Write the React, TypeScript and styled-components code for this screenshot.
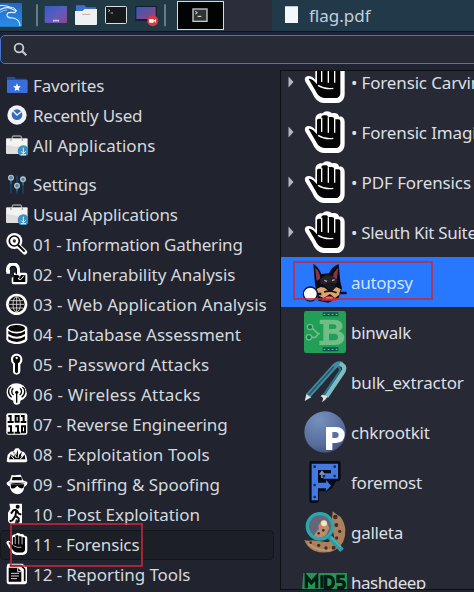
import React from 'react';
import styled, { createGlobalStyle } from 'styled-components';

const Global = createGlobalStyle`
  *, *::before, *::after { box-sizing: border-box; }
  html, body { margin: 0; padding: 0; background: #21242f; overflow: hidden; }
  body { font-family: "Noto Sans", "Open Sans", sans-serif; }
  svg { display: block; flex: none; }
`;

const Screen = styled.div`
  width: 474px;
  height: 592px;
  overflow: hidden;
  display: flex;
  flex-direction: column;
  background: #21242f;
  color: #d5d8dd;
`;

const TopBar = styled.header`
  display: flex;
  align-items: flex-start;
  height: 31px;
  background: #213845;
`;

const Launchers = styled.div`
  display: flex;
  width: 224px;
  height: 31px;
`;

const Gap = styled.div`
  width: 48px;
  height: 31px;
  background: #2b2e3a;
`;

const WindowTab = styled.div`
  flex: 1;
  height: 31px;
  display: flex;
  align-items: center;
  gap: 11px;
  padding-left: 13px;
  background: #22394a;
  color: #c2d0da;
  font-size: 17px;
  line-height: 31px;
`;

const PageIcon = styled.div`
  width: 13px;
  height: 17px;
  background: #f3f8fc;
  border-top: 1px solid #b9c7d2;
  margin-top: -2px;
`;

const SearchWrap = styled.div`
  height: 35px;
  flex: none;
  padding-top: 3px;
  border-top: 1px solid #0c1622;
  background: #1b2438;
`;

const SearchBox = styled.div`
  height: 29px;
  width: 480px;
  display: flex;
  align-items: center;
  padding-left: 12px;
  border: 1px solid #4775cc;
  border-radius: 5px;
  background: #282a35;
`;

const Body = styled.main`
  flex: 1;
  display: flex;
  min-height: 0;
`;

const Sidebar = styled.nav`
  width: 280px;
  padding-top: 5px;
  overflow: hidden;
`;

const Category = styled.div<{ $gapBefore?: boolean; $active?: boolean }>`
  width: 274px;
  height: 30px;
  margin-top: ${p => (p.$gapBefore ? 9 : 0)}px;
  padding: 0 0 2px 6px;
  display: flex;
  align-items: center;
  gap: 5px;
  border-radius: 5px;
  background: ${p => (p.$active ? '#1c1f25' : 'transparent')};
  box-shadow: ${p => (p.$active ? 'inset 0 0 0 1px #14161c' : 'none')};
`;

const Label = styled.span<{ $spacing?: number }>`
  font-size: 17px;
  line-height: 24px;
  padding-top: 1px;
  white-space: pre;
  letter-spacing: ${p => p.$spacing ?? 0}px;
`;

const Results = styled.section`
  flex: 1;
  min-width: 0;
  height: 520px;
  margin-top: 4px;
  overflow: hidden;
  background: #272a35;
  border: solid #0d0f15;
  border-width: 1px 0 1px 1px;
`;

const ResultList = styled.div`
  margin-top: -14px;
`;

const Result = styled.div<{ $active?: boolean }>`
  height: 50px;
  display: flex;
  align-items: center;
  background: ${p => (p.$active ? '#2777ff' : 'transparent')};
  color: ${p => (p.$active ? '#cfe2ff' : '#dcdfe3')};
`;

const ArrowCell = styled.div`
  width: 23px;
  flex: none;
  padding-left: 7px;
`;

const ResultLabel = styled(Label)`
  margin-left: 5px;
  padding-top: 2px;
`;

const Marker = styled.div<{ $x: number; $y: number; $w: number; $h: number }>`
  position: absolute;
  left: ${p => p.$x}px;
  top: ${p => p.$y}px;
  width: ${p => p.$w}px;
  height: ${p => p.$h}px;
  border: 2px solid rgba(200, 40, 62, 0.78);
`;

const Kali = () => (
  <svg width="36" height="31" viewBox="0 0 108 93">
    <defs>
      <linearGradient id="kali" x1="0" y1="0" x2="0" y2="1">
        <stop offset="0" stopColor="#2367c4" />
        <stop offset="1" stopColor="#288de9" />
      </linearGradient>
    </defs>
    <path d="M0 9H62Q66 9 66 13V76Q66 80 62 80H0Z" fill="url(#kali)" />
    <g fill="none" stroke="#dff3ff" strokeWidth="3.5" strokeLinecap="round">
      <path d="M0 17Q18 15 31 22" />
      <path d="M0 29Q20 18 36 27L49 32 44 38Q20 34 21 46 22 54 39 54 58 57 60 76" />
      <path d="M33 22Q44 21 48 31" strokeWidth="3" />
      <path d="M0 37Q10 30 20 30" strokeWidth="2" />
    </g>
  </svg>
);

const Quick = () => (
  <svg width="188" height="31" viewBox="108 0 564 93">
    <defs>
      <linearGradient id="desk" x1="0" y1="0" x2="1" y2="1">
        <stop offset="0" stopColor="#355bc2" />
        <stop offset=".5" stopColor="#5a5dc0" />
        <stop offset="1" stopColor="#8e4690" />
      </linearGradient>
      <linearGradient id="desk2" x1="0" y1="0" x2="1" y2="1">
        <stop offset="0" stopColor="#3059bb" />
        <stop offset="1" stopColor="#9b4378" />
      </linearGradient>
    </defs>
    <path d="M111 13V79M495 13V79" stroke="#81909a" strokeWidth="4.5" />
    <rect x="134" y="18" width="67" height="51" rx="3" fill="url(#desk)" />
    <path d="M159 62h18" stroke="#d4dcff" strokeWidth="5" strokeDasharray="5 1.5" />
    <path d="M228 16h25l6 6h29v22h-60z" fill="#3b70cf" />
    <path d="M225 33h22l7-6h37v45q0 3-3 3h-60q-3 0-3-3z" fill="#eef0f3" />
    <path d="M246 43h25" stroke="#c4968b" strokeWidth="2.5" />
    <rect x="316.500" y="19.500" width="63" height="51" rx="3" fill="#17191b" stroke="#d8dfe2" strokeWidth="3" />
    <path d="M325 29l5 3-5 3M332 39h7" stroke="#cbd2d5" strokeWidth="2.500" fill="none" />
    <rect x="406" y="18" width="64" height="45" fill="#131d2e" />
    <rect x="409" y="21" width="58" height="36" fill="url(#desk2)" />
    <circle cx="458" cy="62" r="16.500" fill="#d63a45" />
    <rect x="447" y="57" width="14" height="11" rx="2" fill="#fff" />
    <path d="M461 62l7-5v11z" fill="#fff" />
    <rect x="532.500" y="10.500" width="138" height="78" fill="#020303" stroke="#d5dade" strokeWidth="3" transform="translate(0 -6) scale(1 1)" />
    <rect x="532.500" y="4.500" width="138" height="84" fill="#020303" stroke="#d5dade" strokeWidth="3" />
    <rect x="579" y="27" width="42" height="37" fill="#2e3335" stroke="#c6cbcd" strokeWidth="4" />
    <path d="M586 34l6 4-6 4M593 49h11" stroke="#f2f4f4" strokeWidth="3" fill="none" />
  </svg>
);

const Search = () => (
  <svg width="15" height="15" viewBox="0 0 45 45">
    <circle cx="18" cy="18" r="13" fill="none" stroke="#c6c9d1" strokeWidth="5.500" />
    <path d="M27 27L40 40" stroke="#c6c9d1" strokeWidth="6.500" />
  </svg>
);

const Briefcase = () => (
  <g>
    <path d="M19 15V9q0-3 4-3h19q4 0 4 3v6" fill="none" stroke="#969a9b" strokeWidth="4" />
    <rect x="0" y="13" width="65" height="47" rx="3" fill="#dedede" />
    <path d="M2 15h61v18L32 38 2 33z" fill="#f2f2f0" />
    <path d="M15 14v7M49 14v7" stroke="#a7a9a9" strokeWidth="4" />
    <circle cx="52" cy="51" r="17" fill="#3c91c0" />
    <path d="M52 41v17M45 52l7 7 7-7M44 62h16" fill="none" stroke="#e1f3fb" strokeWidth="3" />
  </g>
);

const Hand = () => (
  <>
    <path d="M5 48C0 54 3 61 8 68L25 96C33 115 43 125 60 126H96C114 126 122 114 122 98V32C122 20 113 14 106 17C102 5 91 5 84 7C76-2 61-1 56 7C44 5 34 12 34 24V56C26 46 13 41 5 48Z" fill="#fff" />
    <path d="M14 54C21 51 29 58 39 70V28Q39 23 44 23H52V18Q53 13 59 13H67Q71 13 72 18H83Q90 18 91 25H103Q109 25 109 31V98Q107 110 96 111H62C48 110 40 101 35 90Z" fill="#050505" />
    <path d="M53 20V63M73 19V65M92 24V65" stroke="#fff" strokeWidth="4" />
    <path d="M42 73Q63 86 88 82" fill="none" stroke="#fff" strokeWidth="4" />
  </>
);

const icons: Record<string, React.ReactNode> = {
  favorites: (
    <>
      <path d="M3 9h22l5 5h32v12H3z" fill="#224fa5" />
      <rect x="3" y="18" width="62" height="39" rx="3" fill="#386fdb" />
      <path d="M33 28l3.500 8 8 1-6 6 1.500 8-7-4-7 4 1.500-8-6-6 8-1z" fill="#f2f7ff" />
    </>
  ),
  recent: (
    <>
      <circle cx="33" cy="33" r="29" fill="#f2f4f5" />
      <circle cx="33" cy="32" r="16" fill="#356ac0" />
      <path d="M22 22l11 11 13-10" fill="none" stroke="#f4f4f4" strokeWidth="4" />
    </>
  ),
  applications: <Briefcase />,
  settings: (
    <>
      <path d="M15 8v54M33 8v54M51 8v54" stroke="#17436a" strokeWidth="5" />
      <path d="M15 15v17M33 38v17M51 20v17" stroke="#2878a9" strokeWidth="4" />
      <g fill="#5a7d91" stroke="#a8c3ce" strokeWidth="4">
        <circle cx="15" cy="14" r="7" /><circle cx="51" cy="19" r="7" /><circle cx="33" cy="38" r="7" />
      </g>
    </>
  ),
  info: (
    <>
      <path d="M37 39L56 57" stroke="#fff" strokeWidth="15" strokeLinecap="round" />
      <circle cx="25" cy="24" r="24" fill="#fff" />
      <circle cx="25" cy="24" r="15" fill="#fff" stroke="#060708" strokeWidth="5" />
      <path d="M36 36L56 56" stroke="#080808" strokeWidth="6" />
      <circle cx="25" cy="24" r="5" fill="#31343a" />
    </>
  ),
  vulnerability: (
    <>
      <path d="M6 27V18C6-1 36-1 36 18V34" fill="none" stroke="#fff" strokeWidth="12" />
      <path d="M1 22H12V32H1ZM24 29H58Q64 29 64 35V57Q64 64 57 64H25Q17 64 17 57V45L24 40Z" fill="#fff" />
      <path d="M12 20C13 7 30 7 31 20V34" fill="none" stroke="#080909" strokeWidth="4" />
      <path d="M22 36H36L42 42 45 36H58V57H22Z" fill="#030505" />
      <path d="M40 43L37 48l7 2 10-12" fill="none" stroke="#fff" strokeWidth="3" />
    </>
  ),
  web: (
    <>
      <circle cx="32" cy="34" r="32" fill="#fff" />
      <circle cx="32" cy="34" r="24" fill="#0c0e10" />
      <g fill="none" stroke="#e2e2e2" strokeWidth="2.5">
        <ellipse cx="32" cy="34" rx="11" ry="23" />
        <path d="M9 34h46M13 23h38M13 45h38M32 11v46" />
      </g>
    </>
  ),
  database: (
    <>
      <path d="M1 17C2-3 63-3 64 17V49C61 68 4 68 1 49Z" fill="#fff" />
      <ellipse cx="32" cy="16" rx="25" ry="10" fill="#050505" />
      <path d="M7 24Q32 39 57 24V33Q32 49 7 33ZM7 40Q32 55 57 40V49Q32 65 7 49Z" fill="#050505" />
    </>
  ),
  password: (
    <>
      <path d="M15 18C16-3 47-3 49 18 50 27 45 32 43 34V55Q42 65 32 65 21 65 21 55V34Q14 28 15 18Z" fill="#fff" />
      <path d="M21 18C22 6 42 5 43 18Q43 27 36 31V58L31 61 27 57V31Q21 27 21 18Z" fill="#050505" />
      <circle cx="32" cy="15" r="3.500" fill="#fff" />
    </>
  ),
  wireless: (
    <>
      <path d="M10 8Q30-6 53 8 66 23 61 39 55 50 43 53V57Q42 65 32 65 23 65 22 57V53Q7 49 3 36-1 18 10 8Z" fill="#fff" />
      <g fill="none" stroke="#080808" strokeWidth="4">
        <path d="M17 43C3 32 7 16 15 12M47 43C61 32 57 16 49 12M23 36C15 31 16 20 22 16M41 36C49 31 48 20 42 16M32 29V59" />
      </g>
      <circle cx="32" cy="28" r="5" fill="#080808" />
    </>
  ),
  reverse: (
    <>
      <rect x="1" y="1" width="63" height="64" rx="6" fill="#fff" />
      <g fill="none" stroke="#050505" strokeWidth="6">
        <path d="M7 9h7v17M5 27h18M29 9h9v17H29zM45 9h8v17M44 27h17M7 40h8v18M5 59h18M28 40h8v18M26 59h17M48 40h9v18H48z" />
      </g>
    </>
  ),
  exploit: (
    <>
      <path d="M2 55L5 35 14 26 22 25 29 16H38L45 25 54 27 61 38 64 54 60 58H6Z" fill="#fff" />
      <path d="M9 49L14 33 25 42 22 25 31 37 34 20 38 37 48 26 44 42 56 35 58 49Z" fill="#050505" />
      <path d="M24 48L14 37M31 45L24 30M36 45l3-18M43 48L53 37" stroke="#fff" strokeWidth="3" />
    </>
  ),
  spoof: (
    <>
      <path d="M12 22L17 6Q27 8 33 6L44 5 51 22 64 27Q65 38 55 41 53 63 34 64 14 62 11 40 0 36 2 29Z" fill="#fff" />
      <path d="M20 12H46L48 22H17ZM8 29H59Q33 37 8 29Z" fill="#080808" />
      <path d="M14 34H55L52 44Q46 49 38 43L34 38 29 43Q21 50 15 44Z" fill="#050505" />
    </>
  ),
  exit: (
    <>
      <path d="M10 2H48V62H38V54L30 48 26 63H13L6 55V29L13 17Z" fill="#fff" />
      <circle cx="35" cy="11" r="6" fill="#080808" />
      <path d="M32 20L22 22 15 32M31 22L28 39 19 52 11 55M32 22L38 32 46 35M28 38L38 46 38 58" fill="none" stroke="#080808" strokeWidth="6" strokeLinejoin="round" />
    </>
  ),
  report: (
    <>
      <path d="M5 2H49L63 13V58Q63 63 56 64H13Q2 64 2 56V12Z" fill="#fff" />
      <path d="M11 8H45L56 18V55" fill="none" stroke="#070707" strokeWidth="5" />
      <path d="M8 14H35L46 25V56H8Z" fill="#050505" />
      <path d="M35 14V26H46M15 31h24M15 39h24M15 47h18" fill="none" stroke="#d7d7d7" strokeWidth="3" />
    </>
  ),
};

const HandIcon = ({ size }: { size: number }) => (
  <svg width={size} height={size} viewBox="0 0 126 126"><Hand /></svg>
);

const tools: Record<string, React.ReactNode> = {
  hand: <Hand />,
  autopsy: (
    <>
      <path d="M33 70L28 9Q43 17 52 39L75 37Q82 18 104 9L109 62 114 82 104 110 73 125 43 119Z" fill="#090b16" />
      <path d="M33 20Q50 31 48 54L38 59ZM103 20Q87 34 87 49L98 56Z" fill="#853747" />
      <path d="M47 57L64 43 85 44 102 60 95 70 81 65 65 73 52 69Z" fill="#26222b" />
      <path d="M38 84L50 78 62 80 73 90 84 91 96 78 110 84 106 101 93 111 78 99 59 111 45 105Z" fill="#dfa56f" />
      <path d="M60 71L72 67 91 69 95 79 84 89 70 83Z" fill="#171820" />
      <path d="M60 93Q78 87 98 95" fill="none" stroke="#17131e" strokeWidth="5" />
      <path d="M61 58l8 3M84 59l8-3" stroke="#d3a27a" strokeWidth="4" />
      <path d="M59 111Q76 99 92 111L99 119H51Z" fill="#c43545" />
      <path d="M66 112h20" stroke="#f4f4f4" strokeWidth="4" />
      <circle cx="19" cy="99" r="21" fill="#fff" stroke="#07183d" strokeWidth="4" />
      <path d="M40 99h12M107 96h21" stroke="#06102a" strokeWidth="7" />
    </>
  ),
  binwalk: (
    <>
      <rect width="126" height="126" rx="7" fill="#219f57" />
      <path d="M56 4h47v12H56zM56 109h47v12H56z" fill="#0b5550" />
      <path d="M59 10h42M59 115h42" stroke="#7fd197" strokeWidth="3" strokeDasharray="5 7" />
      <path d="M47 26H91Q115 27 116 45 115 56 104 61 122 66 121 82 119 101 94 102H46V89H58V39H47ZM75 40V54H89Q97 54 97 47 97 40 88 40ZM75 68V88H91Q102 88 102 78 102 68 90 68Z" fill="#70bd87" fillRule="evenodd" />
      <path d="M20 47L42 68H48M19 79H35L42 70" fill="none" stroke="#70bd87" strokeWidth="5" />
      <circle cx="18" cy="48" r="8" fill="#15744a" stroke="#70bd87" strokeWidth="4" />
      <circle cx="15" cy="79" r="8" fill="#15744a" stroke="#70bd87" strokeWidth="4" />
    </>
  ),
  bulk: (
    <>
      <path d="M11 106L88 20Q99 5 115 10" fill="none" stroke="#458ba0" strokeWidth="16" />
      <path d="M13 103L90 17" stroke="#235c73" strokeWidth="5" />
      <path d="M107 9Q126 13 119 30L67 107" fill="none" stroke="#80bbc1" strokeWidth="13" />
      <path d="M102 18Q113 21 105 34L58 103" fill="none" stroke="#25768b" strokeWidth="6" />
      <path d="M7 100L22 109 2 120ZM54 101L70 105Q67 117 53 123 63 111 50 106Z" fill="#dae3e4" />
    </>
  ),
  chkrootkit: (
    <>
      <defs><radialGradient id="orb" cx=".35" cy=".2" r=".9"><stop offset="0" stopColor="#7690bd" /><stop offset=".7" stopColor="#566c9b" /><stop offset="1" stopColor="#3c4a73" /></radialGradient></defs>
      <circle cx="63" cy="63" r="62" fill="url(#orb)" />
      <path d="M66 48H96Q122 49 122 72 121 95 96 96H85V117H66ZM85 63V81H94Q104 81 104 72 104 63 94 63Z" fill="#fff" fillRule="evenodd" />
    </>
  ),
  foremost: (
    <>
      <path d="M17 0H105Q110 0 110 7V50Q109 62 96 61L84 82 69 91H45V117Q44 126 36 126H24Q16 126 16 117V8Z" fill="#060b18" />
      <path d="M23 8H102V53H58V37H81V27H42V65H66V57L81 74 66 90V82H42V118H23Z" fill="#437ae2" />
      <path d="M54 51V34M47 41l7-9 7 9" fill="none" stroke="#7896c9" strokeWidth="5" />
      <g fill="#142650"><circle cx="32" cy="17" r="4" /><circle cx="92" cy="17" r="4" /><circle cx="92" cy="45" r="4" /><circle cx="60" cy="45" r="4" /><circle cx="32" cy="72" r="4" /><circle cx="32" cy="108" r="4" /></g>
    </>
  ),
  galleta: (
    <>
      <path d="M86 1Q96 10 109 17 121 31 124 55 126 99 94 117 65 131 30 119 8 108 1 87 16 91 25 88L72 94 91 81 82 39Z" fill="#ad805d" />
      <path d="M13 97Q38 122 82 117" fill="none" stroke="#c29470" strokeWidth="6" />
      <circle cx="48" cy="46" r="35" fill="#65667a" />
      <path d="M30 76Q36 60 45 55L43 44 53 28 69 35 76 52 66 72Q49 86 30 76Z" fill="#bc8c6c" />
      <circle cx="48" cy="46" r="38" fill="none" stroke="#2ba7ae" strokeWidth="10" />
      <path d="M77 78L114 118" stroke="#2d9da3" strokeWidth="15" />
      <path d="M80 77L110 108" stroke="#42bdc0" strokeWidth="4" />
      <circle cx="60" cy="37" r="9" fill="#f6e7b8" />
      <g fill="#432d29"><circle cx="94" cy="18" r="7" /><circle cx="97" cy="42" r="6" /><circle cx="107" cy="61" r="5" /><circle cx="98" cy="81" r="5" /><circle cx="66" cy="111" r="5" /><circle cx="44" cy="103" r="5" /><circle cx="89" cy="110" r="6" /><circle cx="20" cy="95" r="4" /><circle cx="58" cy="58" r="4" /><circle cx="44" cy="67" r="4" /></g>
    </>
  ),
  md5: (
    <>
      <path d="M-2 36H129V90H-6Z" fill="#259355" />
      <path d="M7 82V47L22 65 38 47V82M54 43V82M65 47H75Q88 49 88 63 88 78 75 80H65ZM122 46H102V61H112Q121 62 121 71 121 80 110 80H99" fill="none" stroke="#051c16" strokeWidth="10" />
    </>
  ),
};

interface CategoryItem { icon: string; label: string; spacing?: number; gap?: boolean; active?: boolean }

const categories: CategoryItem[] = [
  { icon: 'favorites', label: 'Favorites', spacing: -0.14 },
  { icon: 'recent', label: 'Recently Used', spacing: -0.26 },
  { icon: 'applications', label: 'All Applications', spacing: 0.04 },
  { icon: 'settings', label: 'Settings', spacing: -0.15, gap: true },
  { icon: 'applications', label: 'Usual Applications', spacing: -0.13 },
  { icon: 'info', label: '01 - Information Gathering', spacing: -0.2 },
  { icon: 'vulnerability', label: '02 - Vulnerability Analysis' },
  { icon: 'web', label: '03 - Web Application Analysis', spacing: 0.05 },
  { icon: 'database', label: '04 - Database Assessment', spacing: -0.03 },
  { icon: 'password', label: '05 - Password Attacks', spacing: 0.15 },
  { icon: 'wireless', label: '06 - Wireless Attacks', spacing: 0.22 },
  { icon: 'reverse', label: '07 - Reverse Engineering', spacing: -0.14 },
  { icon: 'exploit', label: '08 - Exploitation Tools', spacing: 0.1 },
  { icon: 'spoof', label: '09 - Sniffing & Spoofing', spacing: -0.04 },
  { icon: 'exit', label: '10 - Post Exploitation', spacing: -0.05 },
  { icon: 'hand', label: '11 - Forensics', spacing: -0.15, active: true },
  { icon: 'report', label: '12 - Reporting Tools', spacing: -0.08 },
];

const results = [
  { icon: 'hand', label: '• Forensic Carving', spacing: -0.15, group: true },
  { icon: 'hand', label: '• Forensic Imaging', spacing: -0.15, group: true },
  { icon: 'hand', label: '• PDF Forensics', spacing: -0.1, group: true },
  { icon: 'hand', label: '• Sleuth Kit Suite', spacing: -0.3, group: true },
  { icon: 'autopsy', label: 'autopsy', spacing: -0.3, active: true },
  { icon: 'binwalk', label: 'binwalk', spacing: -0.25 },
  { icon: 'bulk', label: 'bulk_extractor', spacing: -0.1 },
  { icon: 'chkrootkit', label: 'chkrootkit', spacing: -0.2 },
  { icon: 'foremost', label: 'foremost', spacing: -0.25 },
  { icon: 'galleta', label: 'galleta', spacing: -0.3 },
  { icon: 'md5', label: 'hashdeep', spacing: -0.5 },
];

export default function App() {
  return (
    <>
      <Global />
      <Screen>
        <TopBar>
          <Launchers><Kali /><Quick /></Launchers>
          <Gap />
          <WindowTab><PageIcon /><span>flag.pdf</span></WindowTab>
        </TopBar>
        <SearchWrap><SearchBox><Search /></SearchBox></SearchWrap>
        <Body>
          <Sidebar>
            {categories.map(c => (
              <Category key={c.label} $gapBefore={c.gap} $active={c.active}>
                {c.icon === 'hand'
                  ? <HandIcon size={22} />
                  : <svg width="22" height="22" viewBox="0 0 66 66">{icons[c.icon]}</svg>}
                <Label $spacing={c.spacing}>{c.label}</Label>
              </Category>
            ))}
          </Sidebar>
          <Results>
            <ResultList>
              {results.map(r => (
                <Result key={r.label} $active={r.active}>
                  <ArrowCell>
                    {r.group && <svg width="6" height="12" viewBox="0 0 6 12"><path d="M0.500 0.500L5.500 6 0.500 11.500Z" fill="#b4b6c2" /></svg>}
                  </ArrowCell>
                  <svg width="42" height="42" viewBox="0 0 126 126" overflow="visible">{tools[r.icon]}</svg>
                  <ResultLabel $spacing={r.spacing}>{r.label}</ResultLabel>
                </Result>
              ))}
            </ResultList>
          </Results>
        </Body>
      </Screen>
      <Marker $x={293} $y={261} $w={140} $h={39} />
      <Marker $x={10} $y={523} $w={133} $h={44} />
    </>
  );
}
